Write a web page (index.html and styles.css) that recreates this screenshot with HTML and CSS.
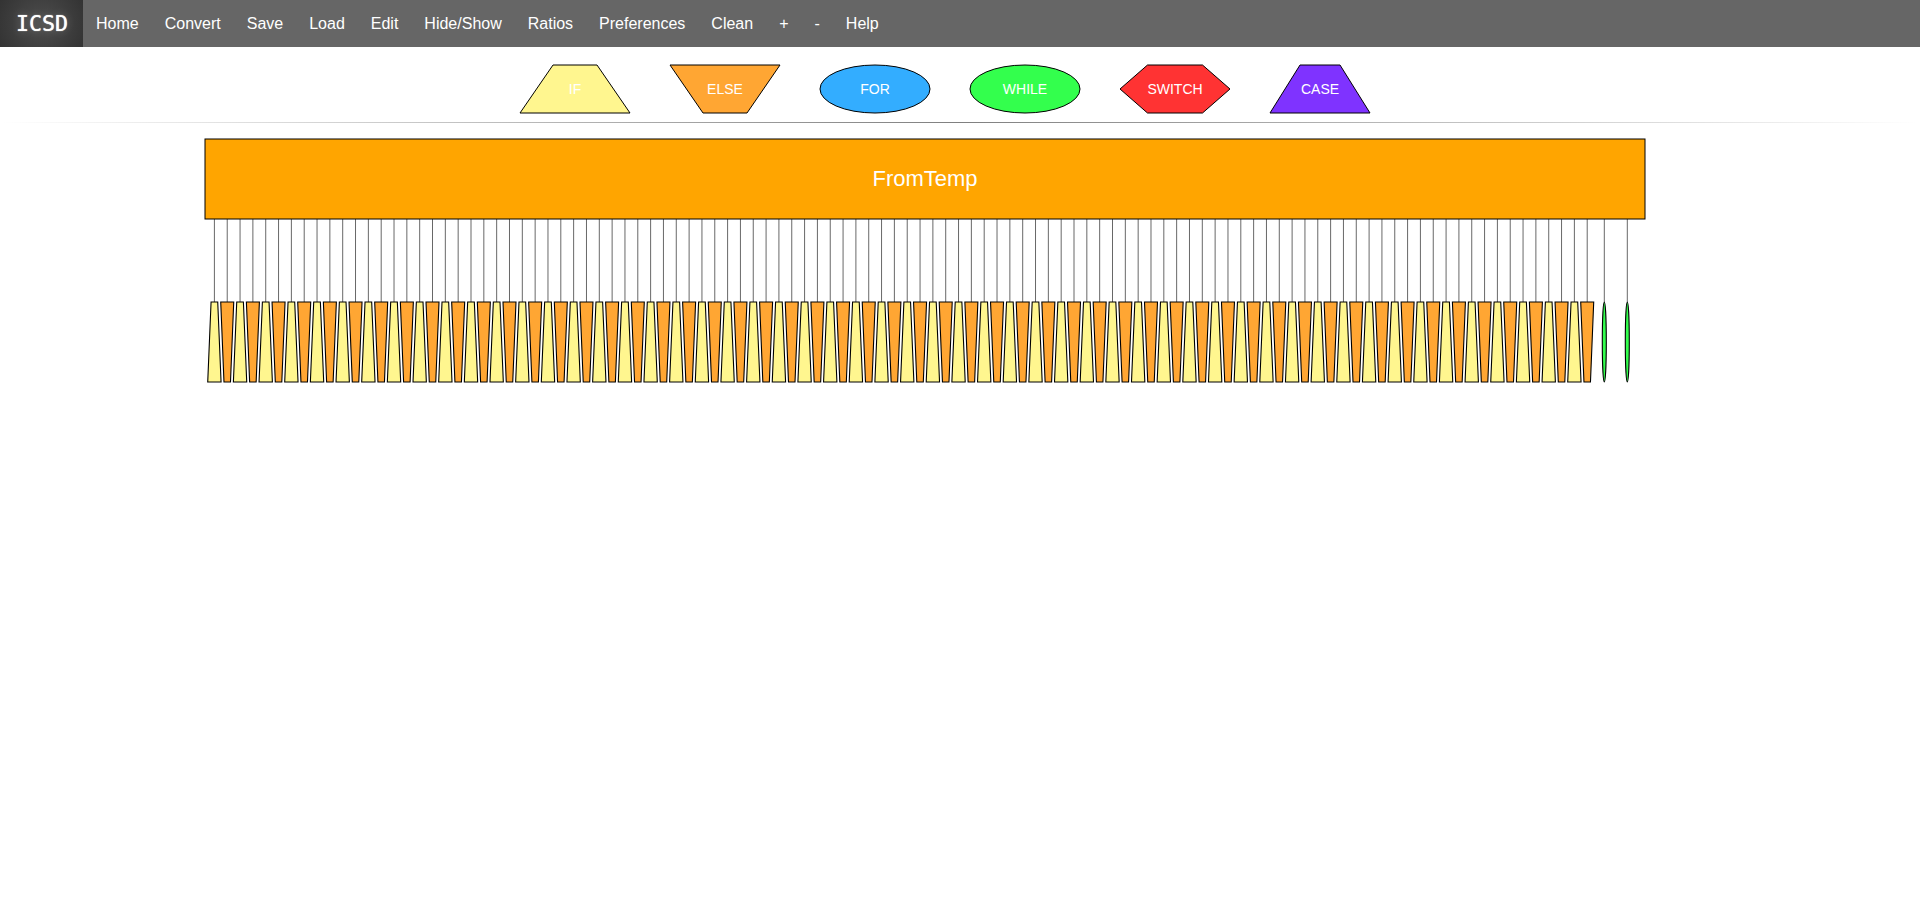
FILE: index.html
```html
<!DOCTYPE html>
<html lang="en">
<head>
  <meta charset="UTF-8" />
  <title>ICSD</title>
  <link rel="stylesheet" href="styles.css">
</head>
<body>

  <nav class="menu">
    <a class="logo" href="#">ICSD</a>
    <a href="#">Home</a>
    <a href="#">Convert</a>
    <a href="#">Save</a>
    <a href="#">Load</a>
    <a href="#">Edit</a>
    <a href="#">Hide/Show</a>
    <a href="#">Ratios</a>
    <a href="#">Preferences</a>
    <a href="#">Clean</a>
    <a href="#">+</a>
    <a href="#">-</a>
    <a href="#">Help</a>
  </nav>

  <!-- Block palette -->
  <div class="palette">
    <svg class="block" width="110" height="48" viewBox="0 0 110 48">
      <polygon class="if" points="33,0 77,0 110,48 0,48" />
      <text x="55" y="29">IF</text>
    </svg>
    <svg class="block" width="110" height="48" viewBox="0 0 110 48">
      <polygon class="else" points="0,0 110,0 77,48 33,48" />
      <text x="55" y="29">ELSE</text>
    </svg>
    <svg class="block" width="110" height="48" viewBox="0 0 110 48">
      <ellipse class="for" cx="55" cy="24" rx="55" ry="24" />
      <text x="55" y="29">FOR</text>
    </svg>
    <svg class="block" width="110" height="48" viewBox="0 0 110 48">
      <ellipse class="while" cx="55" cy="24" rx="55" ry="24" />
      <text x="55" y="29">WHILE</text>
    </svg>
    <svg class="block" width="110" height="48" viewBox="0 0 110 48">
      <polygon class="switch" points="27.5,0 82.5,0 110,24 82.5,48 27.5,48 0,24" />
      <text x="55" y="29">SWITCH</text>
    </svg>
    <svg class="block" width="100" height="48" viewBox="0 0 100 48">
      <polygon class="case" points="30,0 70,0 100,48 0,48" />
      <text x="50" y="29">CASE</text>
    </svg>
  </div>

  <hr class="rule" />

  <!-- Diagram canvas, coordinates are page coordinates -->
  <svg id="diagram" class="diagram" viewBox="0 123 1920 797">
    <rect class="function" x="205" y="139" width="1440" height="80" />
    <text class="function-name" x="925" y="186">FromTemp</text>
  </svg>

  <script src="diagram.js"></script>

</body>
</html>
```

FILE: styles.css
```css
* { box-sizing: border-box; }
body { margin: 0; background: #fff; font-family: "Liberation Sans", Arial, sans-serif; }

/* Top menu */
.menu { display: flex; height: 47px; background: #666; }
.menu a { padding: 0 13px; line-height: 47px; font-size: 16px; color: #fff; text-decoration: none; }
.menu .logo {
  width: 83px;
  padding: 0 16px;
  font-family: "DejaVu Sans Mono", monospace;
  font-size: 21.6px;
  background: radial-gradient(circle, #4d4d4d 0%, #333 100%);
  text-shadow: 0 0 1px #fff, 0 0 8px rgba(255, 255, 255, 0.25);
}

/* Block palette */
.palette { display: flex; justify-content: center; gap: 40px; padding: 18px 30px 0 0; }
.block { display: block; overflow: visible; }
.block polygon, .block ellipse { stroke: #000; stroke-width: 1; }
.block text { fill: #fff; font-size: 14px; text-anchor: middle; }
.if { fill: #fff68f; }
.else { fill: #ffa633; }
.for { fill: #33adff; }
.while { fill: #33ff4d; }
.switch { fill: #ff3333; }
.case { fill: #7f33ff; }

.rule {
  height: 1px;
  margin: 9px 0 0;
  border: 0;
  background: linear-gradient(to right, rgba(0, 0, 0, 0), rgba(0, 0, 0, 0.5), rgba(0, 0, 0, 0));
}

/* Diagram */
.diagram { display: block; width: 1920px; height: 797px; }
.function { fill: #ffa500; stroke: #000; stroke-width: 1; }
.function-name { fill: #fff; font-size: 22px; text-anchor: middle; }
.link { stroke: #000; stroke-width: 0.6; }
.node { stroke: #000; stroke-width: 1.1; }
```

FILE: diagram.js
```js
// Draws the child blocks under the FromTemp box
const diagram = document.getElementById("diagram");
const NS = "http://www.w3.org/2000/svg";
const PITCH = 12.83;
const FIRST_X = 214.4;
const TOP = 302;
const BOTTOM = 382;

function add(tag, className, attrs) {
  const el = document.createElementNS(NS, tag);
  el.setAttribute("class", className);
  for (const key in attrs) el.setAttribute(key, attrs[key]);
  diagram.appendChild(el);
}

function addLink(x) {
  add("line", "link", { x1: x, y1: 219, x2: x, y2: TOP });
}

// if / else pairs
for (let i = 0; i < 108; i++) {
  const x = FIRST_X + i * PITCH;
  const isIf = i % 2 === 0;
  const topHalf = isIf ? 3.33 : 6.5;
  const bottomHalf = isIf ? 6.67 : 3.25;
  addLink(x);
  add("polygon", "node " + (isIf ? "if" : "else"), {
    points: `${x - topHalf},${TOP} ${x + topHalf},${TOP} ${x + bottomHalf},${BOTTOM} ${x - bottomHalf},${BOTTOM}`
  });
}

// while blocks at the end
[1604.3, 1627.3].forEach(x => {
  addLink(x);
  add("ellipse", "node while", { cx: x, cy: (TOP + BOTTOM) / 2, rx: 2, ry: (BOTTOM - TOP) / 2 });
});
```
